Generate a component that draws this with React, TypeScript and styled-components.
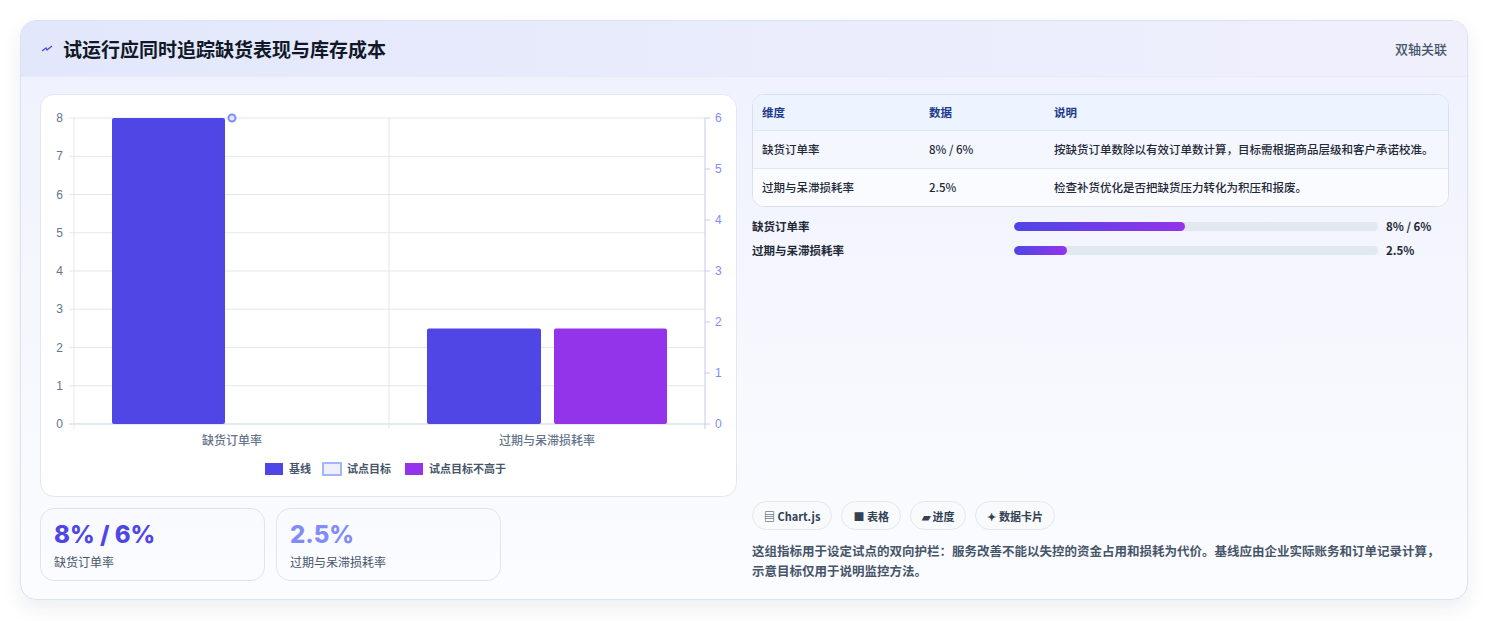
import React from "react";
import styled, { createGlobalStyle } from "styled-components";

const Global = createGlobalStyle`
  body { margin: 0; background: #fff; font-family: "Noto Sans CJK SC", "Noto Sans", sans-serif; color: #1e293b; }
`;

const Page = styled.div`
  padding: 20px 20px 21px 20px;
  width: 1449px;
`;
const Card = styled.div`
  width: 1448px;
  border: 1px solid #dbe1f3;
  border-radius: 16px;
  background: linear-gradient(180deg, #eef1fd 0%, #f7f8fe 60%, #fbfcff 100%);
  box-shadow: 0 8px 20px rgba(30, 41, 80, 0.08);
  overflow: hidden;
  box-sizing: border-box;
`;
const Header = styled.div`
  height: 55px;
  display: flex;
  align-items: center;
  justify-content: space-between;
  padding: 0 20px;
  background: linear-gradient(90deg, #e2e7fb, #ebedfc 60%, #f0f0fd);
  border-bottom: 1px solid #e6e9f7;
`;
const Title = styled.h1`
  margin: 0;
  font-size: 19px;
  font-weight: 700;
  color: #111827;
  display: flex;
  align-items: center;
  gap: 10px;
`;
const Tag = styled.span`
  font-size: 13px;
  color: #475569;
  font-weight: 500;
`;
const Body = styled.div`
  display: grid;
  grid-template-columns: 697px 697px;
  gap: 15px;
  padding: 17px 19px 18px 19px;
`;
const Col = styled.div`
  display: flex;
  flex-direction: column;
`;
const ChartCard = styled.div`
  height: 403px;
  border: 1px solid #e2e7f3;
  border-radius: 14px;
  background: #fff;
  box-sizing: border-box;
`;
const Kpis = styled.div`
  display: flex;
  gap: 11px;
  margin-top: 11px;
`;
const Kpi = styled.div`
  width: 225px;
  height: 73px;
  box-sizing: border-box;
  border: 1px solid #dde4f3;
  border-radius: 14px;
  background: linear-gradient(180deg, #f8faff, #fbfcff);
  padding: 12px 13px;
`;
const KpiValue = styled.div<{ $c: string }>`
  font-family: "Inter", "Noto Sans", sans-serif;
  font-weight: 800;
  font-size: 24px;
  line-height: 28px;
  color: ${(p) => p.$c};
`;
const KpiLabel = styled.div`
  font-size: 12px;
  color: #475569;
  margin-top: 4px;
`;
const Table = styled.div`
  border: 1px solid #d9e0ef;
  border-radius: 12px;
  overflow: hidden;
  background: #fff;
`;
const Row = styled.div<{ $head?: boolean; $alt?: boolean }>`
  display: grid;
  grid-template-columns: 167px 125px 1fr;
  padding: ${(p) => (p.$head ? "9px 9px" : "10px 9px")};
  font-size: 11.5px;
  line-height: 17px;
  font-weight: ${(p) => (p.$head ? 700 : 500)};
  color: ${(p) => (p.$head ? "#1e3a8a" : "#1f2937")};
  background: ${(p) => (p.$head ? "#eef4ff" : p.$alt ? "#fafbff" : "#f5f7ff")};
  border-top: ${(p) => (p.$head ? "none" : "1px solid #e2e8f0")};
  min-height: ${(p) => (p.$head ? "15px" : "auto")};
`;
const Bars = styled.div`
  display: flex;
  flex-direction: column;
  gap: 9px;
  margin-top: 12px;
`;
const BarRow = styled.div`
  display: grid;
  grid-template-columns: 262px 364px 1fr;
  align-items: center;
  gap: 0;
  font-size: 11.5px;
  line-height: 15px;
  font-weight: 600;
  color: #1f2937;
`;
const Track = styled.div`
  height: 9px;
  border-radius: 5px;
  background: #e2e8f0;
  overflow: hidden;
`;
const Fill = styled.div`
  height: 100%;
  border-radius: 5px;
  background: linear-gradient(90deg, #4f46e5, #9333ea);
`;
const BarVal = styled.span`
  padding-left: 8px;
  font-weight: 700;
`;
const Spacer = styled.div`
  flex: 1;
`;
const Chips = styled.div`
  display: flex;
  gap: 9px;
`;
const Chip = styled.span`
  display: inline-flex;
  align-items: center;
  gap: 3px;
  height: 29px;
  padding: 0 11px;
  box-sizing: border-box;
  border: 1px solid #e2e8f0;
  border-radius: 15px;
  background: #f8fafc;
  font-size: 11px;
  font-weight: 700;
  color: #334155;
`;
const Note = styled.p`
  margin: 11px 0 0;
  font-size: 12.5px;
  line-height: 20px;
  font-weight: 600;
  color: #475569;
`;

const AXIS = "#64748b";
const Chart = () => {
  // coords relative to card (card at x=40,y=93)
  const L = 33, R = 664, T = 23, B = 329;
  const yL = (v: number) => B - (v / 8) * (B - T);
  const yR = (v: number) => B - (v / 6) * (B - T);
  return (
    <svg width={697} height={401} style={{ display: "block" }}>
      {[0, 1, 2, 3, 4, 5, 6, 7, 8].map((v) => (
        <g key={v}>
          <line x1={L - 5} x2={R} y1={yL(v)} y2={yL(v)} stroke={v === 0 ? "#cbd5e1" : "#e5e7eb"} />
          <text x={22} y={yL(v) + 4} textAnchor="end" fontSize={12} fill={AXIS} fontFamily="Liberation Sans, sans-serif">{v}</text>
        </g>
      ))}
      {[0, 1, 2, 3, 4, 5, 6].map((v) => (
        <g key={v}>
          <line x1={R} x2={R + 5} y1={yR(v)} y2={yR(v)} stroke="#c7cbea" />
          <text x={674} y={yR(v) + 4} fontSize={12} fill="#818cf8" fontFamily="Liberation Sans, sans-serif">{v}</text>
        </g>
      ))}
      <line x1={L} x2={L} y1={T} y2={B + 5} stroke="#e5e7eb" />
      <line x1={348} x2={348} y1={T} y2={B + 5} stroke="#e5e7eb" />
      <line x1={R} x2={R} y1={T} y2={B + 5} stroke="#c7cbea" />
      <rect x={71} y={yL(8)} width={113} height={B - yL(8)} rx={2} fill="#4f46e5" />
      <circle cx={191} cy={yL(8)} r={3.5} fill="#e0e7ff" stroke="#818cf8" strokeWidth={2} />
      <rect x={386} y={yL(2.5)} width={114} height={B - yL(2.5)} rx={2} fill="#4f46e5" />
      <rect x={513} y={yL(2.5)} width={113} height={B - yL(2.5)} rx={2} fill="#9333ea" />
      <text x={191} y={350} textAnchor="middle" fontSize={12} fill={AXIS} fontWeight={500}>缺货订单率</text>
      <text x={506} y={350} textAnchor="middle" fontSize={12} fill={AXIS} fontWeight={500}>过期与呆滞损耗率</text>
      <g fontSize={11} fill="#475569" fontWeight={600}>
        <rect x={224} y={368} width={18} height={12} fill="#4f46e5" />
        <text x={248} y={378}>基线</text>
        <rect x={282} y={368} width={18} height={12} fill="#eef0ff" stroke="#a5b4fc" strokeWidth={2} />
        <text x={306} y={378}>试点目标</text>
        <rect x={364} y={368} width={18} height={12} fill="#9333ea" />
        <text x={388} y={378}>试点目标不高于</text>
      </g>
    </svg>
  );
};

export default function App() {
  return (
    <Page>
      <Global />
      <Card>
        <Header>
          <Title>
            <svg width="12" height="10" viewBox="0 0 12 10"><path d="M1 7 L5 4 L6 6 L11 2" stroke="#4f46e5" strokeWidth="1.3" fill="none" /></svg>
            试运行应同时追踪缺货表现与库存成本
          </Title>
          <Tag>双轴关联</Tag>
        </Header>
        <Body>
          <Col>
            <ChartCard><Chart /></ChartCard>
            <Kpis>
              <Kpi><KpiValue $c="#4f46e5">8% / 6%</KpiValue><KpiLabel>缺货订单率</KpiLabel></Kpi>
              <Kpi><KpiValue $c="#818cf8">2.5%</KpiValue><KpiLabel>过期与呆滞损耗率</KpiLabel></Kpi>
            </Kpis>
          </Col>
          <Col>
            <Table>
              <Row $head><span>维度</span><span>数据</span><span>说明</span></Row>
              <Row><span>缺货订单率</span><span>8% / 6%</span><span>按缺货订单数除以有效订单数计算，目标需根据商品层级和客户承诺校准。</span></Row>
              <Row $alt><span>过期与呆滞损耗率</span><span>2.5%</span><span>检查补货优化是否把缺货压力转化为积压和报废。</span></Row>
            </Table>
            <Bars>
              <BarRow><span>缺货订单率</span><Track><Fill style={{ width: "47%" }} /></Track><BarVal>8% / 6%</BarVal></BarRow>
              <BarRow><span>过期与呆滞损耗率</span><Track><Fill style={{ width: "14.5%" }} /></Track><BarVal>2.5%</BarVal></BarRow>
            </Bars>
            <Spacer />
            <Chips>
              <Chip>▤ Chart.js</Chip>
              <Chip>■ 表格</Chip>
              <Chip>▰ 进度</Chip>
              <Chip>✦ 数据卡片</Chip>
            </Chips>
            <Note>这组指标用于设定试点的双向护栏：服务改善不能以失控的资金占用和损耗为代价。基线应由企业实际账务和订单记录计算，示意目标仅用于说明监控方法。</Note>
          </Col>
        </Body>
      </Card>
    </Page>
  );
}
